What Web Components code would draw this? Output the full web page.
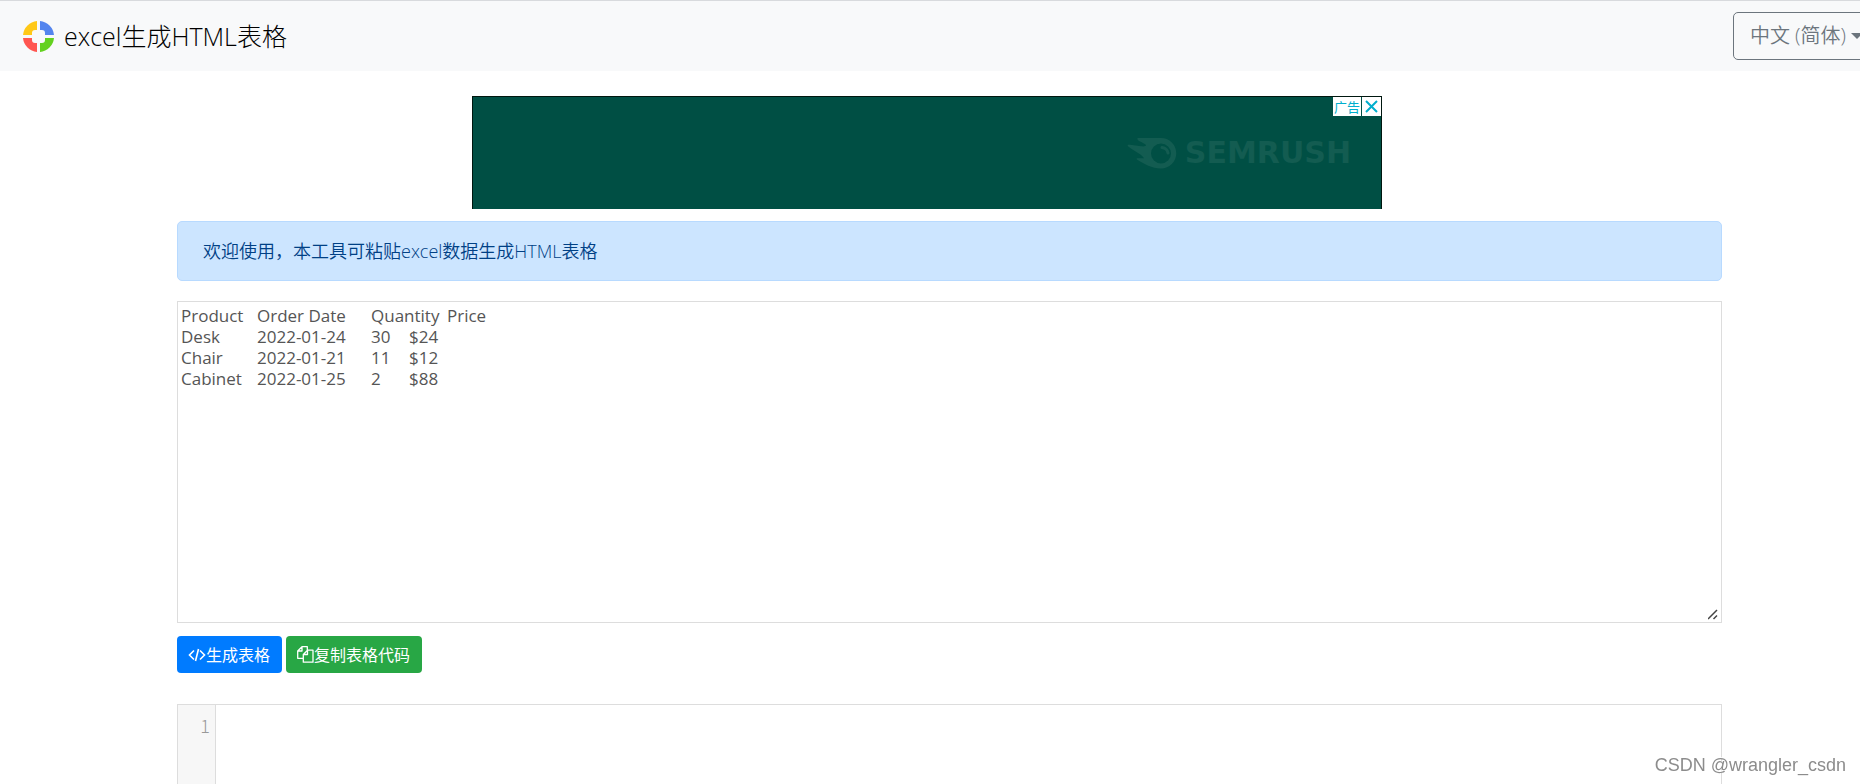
<!DOCTYPE html>
<html lang="zh-CN">
<head>
<meta charset="utf-8">
<title>excel生成HTML表格</title>
<style>
body {
  margin: 0; background: #fff; color: #212529;
  font-family: "Open Sans", "Noto Sans CJK SC", sans-serif;
}
</style>
</head>
<body>
<excel-app></excel-app>
<script>
const define = (name, html, setup) => {
  const template = document.createElement('template');
  template.innerHTML = '<style>*{box-sizing:border-box}</style>' + html;
  customElements.define(name, class extends HTMLElement {
    constructor() {
      super();
      this.attachShadow({ mode: 'open' }).append(template.content.cloneNode(true));
      if (setup) setup(this.shadowRoot);
    }
  });
};

define('brand-logo', `
<style>
:host { display: block; }
a { display: flex; align-items: center; gap: 10px; color: #000; text-decoration: none; font-size: 25px; line-height: 36px; font-weight: 300; }
svg { display: block; }
</style>
<a href="#">
  <svg width="31" height="31" viewBox="0 0 31 31" aria-hidden="true">
    <path fill="#ffc817" d="M14 0v9h-2a3 3 0 0 0-3 3v2H0A15.500 15.500 0 0 1 14 0z"/>
    <path fill="#5485ee" d="M17 0a15.500 15.500 0 0 1 14 14h-9v-2a3 3 0 0 0-3-3h-2z"/>
    <path fill="#ff5650" d="M0 17h9v2a3 3 0 0 0 3 3h2v9A15.500 15.500 0 0 1 0 17z"/>
    <path fill="#63d11f" d="M17 31v-9h2a3 3 0 0 0 3-3v-2h9a15.500 15.500 0 0 1-14 14z"/>
  </svg>
  <span><slot></slot></span>
</a>`);

define('language-menu', `
<style>
:host { display: block; }
button { display: flex; align-items: center; gap: 5px; height: 48px; padding: 0 16px; border: 1px solid #6c757d; border-radius: 5px; background: transparent; color: #6c757d; font: 350 20px/28px "Open Sans", "Noto Sans CJK SC", sans-serif; white-space: nowrap; }
i { border: 6px solid transparent; border-top-color: #6c757d; border-bottom: 0; }
</style>
<button type="button" aria-haspopup="true"><slot></slot><i></i></button>`);

define('nav-bar', `
<style>
:host { display: flex; align-items: center; justify-content: space-between; height: 71px; padding-left: 23px; border-top: 1px solid #d8dadd; background: #f8f9fa; overflow: hidden; }
/* the menu runs past the window's edge */
language-menu { margin-right: -20px; }
</style>
<brand-logo>excel生成HTML表格</brand-logo>
<language-menu>中文 (简体)</language-menu>`);

define('ad-banner', `
<style>
:host { display: block; position: relative; box-sizing: border-box; width: 910px; max-width: 100%; height: 113px; border: 1px solid #00170f; border-bottom: 0; background: #004f44; }
.logo { height: 100%; display: flex; align-items: center; justify-content: flex-end; gap: 8px; padding-right: 30px; color: #135c51; font: 700 30px/32px "DejaVu Sans", sans-serif; }
.tools { position: absolute; top: 0; right: 0; display: flex; gap: 1px; height: 19px; }
.tools a, .tools button { display: flex; align-items: center; justify-content: center; height: 19px; border: 0; padding: 0; background: #fff; color: #00aecd; text-decoration: none; font: 400 13px/19px "Noto Sans CJK SC", sans-serif; }
.tools a { width: 28px; }
.tools button { width: 19px; }
</style>
<div class="logo">
  <svg width="50" height="31" viewBox="0 0 50 31" aria-hidden="true">
    <path fill="#135c51" fill-rule="evenodd" d="M11 0h23a15.200 15.200 0 0 1 0 30.500C25 30.500 17 26 10 21.500 9 20.500 10 20 12 20.200h5c-1-1.500-2-2.500-4-4C9 13.500 4 11 1 8.200 0 7 1 6.500 3 6.800l11 1.500c3 .3 5 0 5-1S17 5.500 12 3C10 1.500 10 0 11 0zM34 5.500a10 10 0 1 0 0 20 10 10 0 0 0 0-20z"/>
    <path fill="none" stroke="#135c51" stroke-width="3" stroke-linecap="round" d="M35 9.500c3.500.5 5.500 2.500 6 5.500"/>
  </svg>
  <span>SEMRUSH</span>
</div>
<div class="tools"><a href="#">广告</a><button type="button" aria-label="关闭"><svg width="13" height="13" viewBox="0 0 13 13"><path d="M1 1l11 11M12 1L1 12" stroke="#00aecd" stroke-width="2"/></svg></button></div>`);

define('info-alert', `
<style>
:host { display: block; padding: 15px 25px; border: 1px solid #b8daff; border-radius: 5px; background: #cce5ff; color: #004085; font-size: 18px; line-height: 28px; font-weight: 350; }
</style>
<slot></slot>`);

define('sheet-input', `
<style>
:host { display: block; }
textarea { display: block; width: 100%; height: 322px; margin: 0; padding: 3px; border: 1px solid #ddd; border-radius: 0; outline: 0; color: #555; background: #fff; font: 400 17px/21px "Open Sans", sans-serif; tab-size: 38px; resize: both; }
textarea::-webkit-resizer { background: url("data:image/svg+xml,%3Csvg xmlns='http://www.w3.org/2000/svg' width='13' height='13'%3E%3Cpath d='M0 10L9 1M5.500 10L9 6.500' stroke='%23444' stroke-width='1.500'/%3E%3C/svg%3E") right bottom no-repeat; }
</style>
<textarea aria-label="excel" spellcheck="false"></textarea>`, root => {
  root.querySelector('textarea').value = [
    'Product\tOrder Date\tQuantity\tPrice',
    'Desk\t2022-01-24\t30\t$24',
    'Chair\t2022-01-21\t11\t$12',
    'Cabinet\t2022-01-25\t2\t$88'
  ].join('\n');
});

define('action-button', `
<style>
:host { display: block; }
button { display: flex; align-items: center; height: 37px; padding: 0 12px 0 11px; border: 0; border-radius: 4px; background: var(--fill); color: #fff; font: 400 16px/24px "Open Sans", "Noto Sans CJK SC", sans-serif; white-space: nowrap; }
</style>
<button type="button"><slot name="icon"></slot><slot></slot></button>`);

define('code-view', `
<style>
:host { display: flex; border: 1px solid #ddd; border-bottom: 0; background: #fff; }
.gutter { width: 38px; padding: 8px 5px; border-right: 1px solid #ddd; background: #f7f7f7; color: #999; font: 300 18px/24px "Noto Sans CJK SC", monospace; text-align: right; }
.code { flex: 1; }
</style>
<div class="gutter">1</div><div class="code"></div>`);

define('water-mark', `
<style>
:host { position: fixed; right: 14px; bottom: 7px; color: #8c8c8c; font: 400 18px/24px "Liberation Sans", sans-serif; text-shadow: -1px -1px 0 #fff; }
</style>
<slot></slot>`);

define('excel-app', `
<style>
:host { display: flex; flex-direction: column; min-height: 100vh; }
main { flex: 1; display: flex; flex-direction: column; padding: 25px 138px 0 177px; }
ad-banner { margin: 0 0 12px 295px; }
info-alert { margin-bottom: 20px; }
.actions { display: flex; gap: 4px; margin: 13px 0 31px; }
code-view { flex: 1; }
svg { display: block; }
.make { --fill: #007bff; }
.copy { --fill: #28a745; }
</style>
<nav-bar></nav-bar>
<main>
  <ad-banner></ad-banner>
  <info-alert>欢迎使用，本工具可粘贴excel数据生成HTML表格</info-alert>
  <sheet-input></sheet-input>
  <div class="actions">
    <action-button class="make"><svg slot="icon" width="18" height="14" viewBox="0 0 18 14" fill="none" stroke="#fff" stroke-width="1.600"><path d="M6 2.500L1.500 7 6 11.500M12 2.500L16.500 7 12 11.500M10.500 1l-3 12"/></svg>生成表格</action-button>
    <action-button class="copy"><svg slot="icon" width="17" height="17" viewBox="0 0 17 17" fill="none" stroke="#fff" stroke-width="1.300" stroke-linejoin="round"><path d="M6 12.300H.7V5L5 .7h5.300v3.500M5 .7V5H.7M10.500 4.200H16v12H6.300V8.500zM10.500 4.200v4.300H6.300"/></svg>复制表格代码</action-button>
  </div>
  <code-view></code-view>
</main>
<water-mark>CSDN @wrangler_csdn</water-mark>`);
</script>
</body>
</html>
